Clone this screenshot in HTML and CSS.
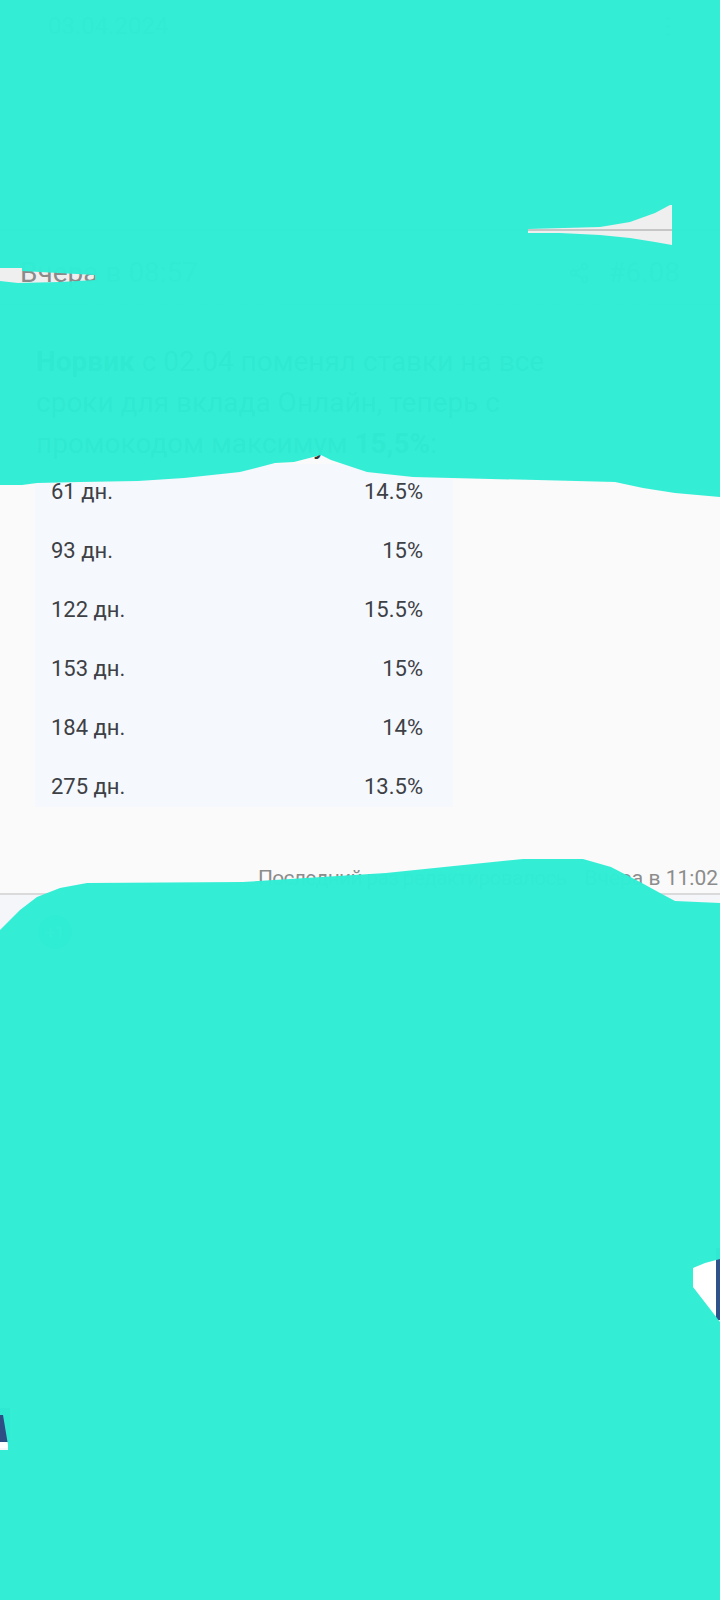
FILE: index.html
```html
<!DOCTYPE html>
<html lang="ru">
<head>
<meta charset="utf-8">
<title>Вклады</title>
<link rel="stylesheet" href="styles.css">
</head>
<body>
<div class="page">
  <header class="topbar">
    <span class="date">03.04.2024</span>
    <span class="topbar-more">⋮</span>
  </header>
  <div class="post-head">
    <span class="when">Вчера в 08:57</span>
    <span class="meta">
      <svg class="share" width="22" height="22" viewBox="0 0 24 24"><circle cx="18" cy="5" r="3" fill="none" stroke="#8a8a8a" stroke-width="2"/><circle cx="6" cy="12" r="3" fill="none" stroke="#8a8a8a" stroke-width="2"/><circle cx="18" cy="19" r="3" fill="none" stroke="#8a8a8a" stroke-width="2"/><path d="M8.6 13.5l6.8 4M15.4 6.5l-6.8 4" stroke="#8a8a8a" stroke-width="2"/></svg>
      <span>#6.08</span>
    </span>
  </div>
  <article class="post">
    <p class="post-text"><b>Норвик</b> с 02.04 поменял ставки на все<br>сроки для вклада Онлайн, теперь с<br>промокодом максимум <b>15,5%</b>:</p>
    <div class="rates">
      <div class="rate-row"><span>61 дн.</span><span>14.5%</span></div>
      <div class="rate-row"><span>93 дн.</span><span>15%</span></div>
      <div class="rate-row"><span>122 дн.</span><span>15.5%</span></div>
      <div class="rate-row"><span>153 дн.</span><span>15%</span></div>
      <div class="rate-row"><span>184 дн.</span><span>14%</span></div>
      <div class="rate-row"><span>275 дн.</span><span>13.5%</span></div>
    </div>
    <div class="edit-note"><span class="edit-label">Последний раз редактировалось</span><span class="edit-time">Вчера в 11:02</span></div>
  </article>
  <section class="feed">
    <div class="actions"><span class="plus">+1</span></div>
    <div class="promo"></div>
    <div class="promo-left"></div>
  </section>
  <svg class="redact" width="720" height="1600" viewBox="0 0 720 1600">
    <path fill-rule="evenodd" d="M0 0 H720 V497 L675 493 L643 488 L615 482 L413 477 L367 472 L331 460 L321 455 L294 462 L275 463 L240 472 L184 478 L138 481 L80 482 L37 483 L22 485 L0 485 Z M0 268 L22 268 L22 271 L95 275 L95 280 L60 282 L18 283 L0 281 Z M528 229 L600 227 L630 222 L655 213 L670 205 L672 205 L672 245 L655 242 L630 238 L600 235 L560 233 L528 233 Z"/>
    <path fill-rule="evenodd" d="M0 930 L20 910 L37 897 L60 888 L87 883 L243 882 L386 873 L523 859 L583 859 L611 867 L640 882 L660 893 L675 901 L720 903 V1600 H0 Z M693 1268 L705 1263 L720 1259 L720 1322 L717 1318 L693 1287 Z M0 1415 L3 1415 L8 1445 L8 1450 L0 1450 Z"/>
  </svg>
</div>
</body>
</html>
```

FILE: styles.css
```css
* { box-sizing: border-box; }
html, body { margin: 0; padding: 0; }
body {
  width: 720px;
  height: 1600px;
  overflow: hidden;
  font-family: Roboto, "Liberation Sans", sans-serif;
  background: #f4f6fa;
}
.page {
  position: relative;
  width: 720px;
  height: 1600px;
  overflow: hidden;
}
.topbar {
  height: 231px;
  background: #efefef;
  border-bottom: 2px solid #c6c6c6;
  display: flex;
  justify-content: space-between;
  align-items: flex-start;
  padding: 10px 40px 0 48px;
  color: #8a8a8a;
  font-size: 24px;
  line-height: 32px;
}
.post-head {
  height: 74px;
  background: #efefef;
  border-bottom: 1px dashed #cfcfcf;
  display: flex;
  justify-content: space-between;
  align-items: center;
  padding: 10px 40px 0 20px;
  color: #8a8a8a;
  font-size: 28px;
}
.meta { display: flex; align-items: center; gap: 18px; }
.post {
  background: #fafafa;
  padding: 36px 0 0 35px;
}
.post-text {
  margin: 0;
  padding-left: 1px;
  font-size: 28px;
  line-height: 41px;
  color: #333;
}
.rates {
  width: 418px;
  background: #f5f8fd;
  display: grid;
  row-gap: 35px;
  padding: 16px 30px 8px 16px;
}
.rate-row {
  display: flex;
  justify-content: space-between;
  font-size: 22px;
  line-height: 24px;
  color: #3d4045;
}
.edit-note {
  height: 88px;
  margin-left: -35px;
  display: flex;
  justify-content: space-between;
  align-items: flex-end;
  gap: 12px;
  padding: 0 2px 1px 258px;
  font-size: 21px;
  line-height: 28px;
  white-space: nowrap;
  color: #8c8c8c;
  border-bottom: 2px solid #dadada;
}
.edit-label { letter-spacing: -0.7px; }
.edit-time { letter-spacing: 0; }
.feed {
  height: 701px;
  background: #f4f6fa;
}
.actions {
  height: 100px;
  padding: 20px 0 0 38px;
}
.plus {
  display: inline-flex;
  width: 34px;
  height: 34px;
  border-radius: 50%;
  background: #21c9b4;
  color: #fff;
  font-size: 16px;
  align-items: center;
  justify-content: center;
}
.promo {
  margin: 253px 0 0 auto;
  width: 60px;
  height: 72px;
  background: #fff;
  border-right: 4px solid #30528a;
}
.promo-left {
  margin-top: 88px;
  width: 10px;
  height: 40px;
  background: #2e4d84;
  border-bottom: 6px solid #fff;
}
.redact {
  position: absolute;
  top: 0;
  left: 0;
  pointer-events: none;
  fill: #30edd4;
  fill-opacity: 0.98;
}
```
